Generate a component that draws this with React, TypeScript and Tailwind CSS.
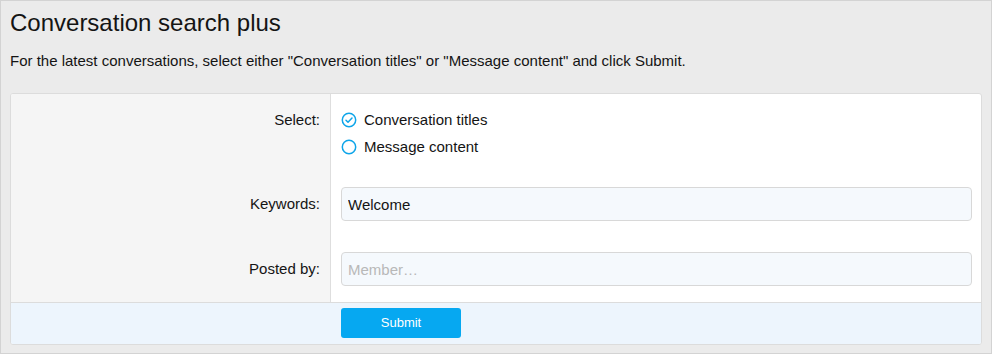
import { useState } from "react";

const font = { fontFamily: '"Liberation Sans", Arial, sans-serif' };

function Radio({ checked }: { checked: boolean }) {
  return (
    <svg width="16" height="16" viewBox="0 0 16 16" className="shrink-0">
      <circle cx="8" cy="8" r="6.7" fill="none" stroke="#0ea5e9" strokeWidth="1.5" />
      {checked && (
        <path
          d="M5 8.3l2 2 4-4.2"
          fill="none"
          stroke="#0ea5e9"
          strokeWidth="1.5"
          strokeLinecap="round"
          strokeLinejoin="round"
        />
      )}
    </svg>
  );
}

export default function App() {
  const [mode, setMode] = useState<"titles" | "content">("titles");
  const [keywords, setKeywords] = useState("Welcome");
  const [member, setMember] = useState("");

  return (
    <div
      style={font}
      className="w-[992px] h-[354px] border border-[#d3d3d3] bg-[#ebebeb] px-[9px] text-[#141414] overflow-hidden"
    >
      <h1 className="mt-[7px] text-[24px] leading-[30px] font-normal">Conversation search plus</h1>
      <p className="mt-[13px] text-[15px] leading-[20px]">
        For the latest conversations, select either "Conversation titles" or "Message content" and click Submit.
      </p>

      <div className="mt-[22px] border border-[#dcdcdc] rounded-[3px] bg-white overflow-hidden text-[15px]">
        <div className="grid grid-cols-[320px_1fr]">
          <div className="bg-[#f5f5f5] border-r border-[#dedede] pt-[16px] pb-[15px] pr-[10px] text-right leading-[20px]">
            Select:
          </div>
          <div className="pl-[10px] pr-[9px] pt-[16px] pb-[15px] flex flex-col gap-[7px]">
            <label className="flex items-center gap-[7px] h-[20px] cursor-pointer" onClick={() => setMode("titles")}>
              <Radio checked={mode === "titles"} />
              <span>Conversation titles</span>
            </label>
            <label className="flex items-center gap-[7px] h-[20px] cursor-pointer" onClick={() => setMode("content")}>
              <Radio checked={mode === "content"} />
              <span>Message content</span>
            </label>
          </div>

          <div className="bg-[#f5f5f5] border-r border-[#dedede] pt-[15px] pb-[15px] pr-[10px] text-right leading-[34px]">
            Keywords:
          </div>
          <div className="pl-[10px] pr-[9px] pt-[15px] pb-[15px]">
            <input
              value={keywords}
              onChange={(e) => setKeywords(e.target.value)}
              className="w-full h-[34px] px-[6px] rounded-[4px] border border-[#d8d8d8] bg-[#f5f9fd] text-[15px] text-[#141414] outline-none"
            />
          </div>

          <div className="bg-[#f5f5f5] border-r border-[#dedede] pt-[16px] pb-[16px] pr-[10px] text-right leading-[34px]">
            Posted by:
          </div>
          <div className="pl-[10px] pr-[9px] pt-[16px] pb-[16px]">
            <input
              value={member}
              onChange={(e) => setMember(e.target.value)}
              placeholder="Member…"
              className="w-full h-[34px] px-[6px] rounded-[4px] border border-[#d8d8d8] bg-[#f5f9fd] text-[15px] text-[#141414] placeholder:text-[#b8b8b8] outline-none"
            />
          </div>
        </div>

        <div className="grid grid-cols-[320px_1fr] bg-[#edf5fd] border-t border-[#dcdcdc] pt-[5px] pb-[6px]">
          <div />
          <div className="pl-[10px]">
            <button
              type="button"
              className="w-[120px] h-[30px] rounded-[3px] bg-[#06a8f1] text-white text-[13px]"
            >
              Submit
            </button>
          </div>
        </div>
      </div>
    </div>
  );
}
